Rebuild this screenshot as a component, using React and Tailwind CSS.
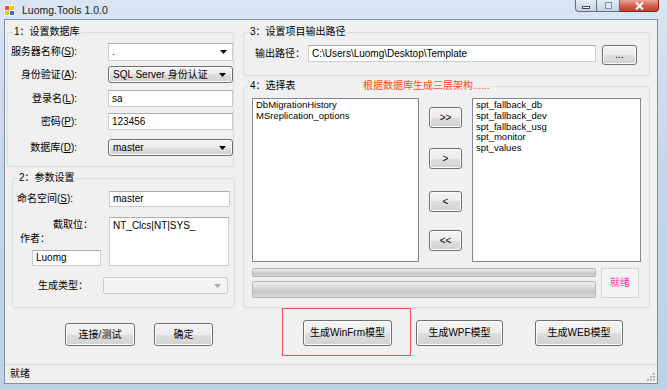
import React from "react";

const font = "font-['Liberation_Sans','Noto_Sans_CJK_SC',sans-serif]";
const btnSkin =
  "rounded-[3px] border border-[#707070] bg-[linear-gradient(#f4f4f4_0%,#ececec_50%,#dedede_50%,#d2d2d2_100%)] shadow-[inset_0_0_0_1px_#fbfbfb] text-[10px] leading-[12px] text-black";
const btn = `flex items-center justify-center ${btnSkin}`;
const textbox =
  "flex items-center bg-white border border-[#c9ccd3] border-t-[#abadb3] px-[3px] text-[10px] leading-[12px] text-black";
const groupBox = "border border-[#d5dfe5] rounded-[3px]";
const legendCls = "ml-[5px] px-[1px] text-[10px] leading-[12px] text-black";

function Arrow({ color = "#000" }) {
  return (
    <svg width="7" height="4" viewBox="0 0 7 4">
      <path d="M0 0h7L3.5 4z" fill={color} />
    </svg>
  );
}

// "(S):" style label with underlined access key
function Label({ text, keyChar, className }) {
  return (
    <div className={className}>
      {text}(<span className="underline">{keyChar}</span>):
    </div>
  );
}

function ComboEdit({ value, className }) {
  return (
    <div className={`${textbox} justify-between pr-[5px] ${className}`}>
      <span>{value}</span>
      <Arrow />
    </div>
  );
}

function ComboList({ value, className }) {
  return (
    <div className={`flex items-center justify-between pl-[4px] pr-[6px] ${btnSkin} ${className}`}>
      <span>{value}</span>
      <Arrow />
    </div>
  );
}

function AppIcon() {
  return (
    <svg width="11" height="11" viewBox="0 0 11 11">
      <rect x="0" y="0" width="11" height="11" fill="#f4f4f4" />
      <rect x="1" y="1" width="4" height="4" fill="#e8502a" />
      <rect x="6" y="1" width="4" height="4" fill="#f3c21c" />
      <rect x="1" y="6" width="4" height="4" fill="#f3c21c" />
      <rect x="6" y="6" width="4" height="4" fill="#2f72c9" />
    </svg>
  );
}

function CaptionButtons() {
  return (
    <div className="ml-auto mr-[8px] flex h-[12px] self-start">
      <div className="flex w-[22px] items-center justify-center rounded-bl-[4px] border border-t-0 border-[#5c6f86] bg-[linear-gradient(#e5edf6,#c3d2e3)]">
        <div className="mt-[3px] h-[3px] w-[8px] border border-[#3c4b5d] bg-white" />
      </div>
      <div className="flex w-[23px] items-center justify-center border border-l-0 border-t-0 border-[#5c6f86] bg-[linear-gradient(#e5edf6,#c3d2e3)]">
        <div className="h-[7px] w-[7px] border border-[#7d8ea3] bg-[#dfe7f0]" />
      </div>
      <div className="flex w-[39px] items-center justify-center rounded-br-[4px] border border-l-0 border-t-0 border-[#7a2a1e] bg-[linear-gradient(#e9a99a,#d45a44_55%,#c2412b)]">
        <svg width="9" height="8" viewBox="0 0 9 8">
          <path d="M1 0.5l7 7M8 0.5l-7 7" stroke="#fff" strokeWidth="2" />
        </svg>
      </div>
    </div>
  );
}

function SizeGrip() {
  const dots = [
    [7, 1],
    [4, 4],
    [7, 4],
    [1, 7],
    [4, 7],
    [7, 7],
  ];
  return (
    <svg width="10" height="10" viewBox="0 0 10 10" className="ml-auto self-end mb-[1px] mr-[1px]">
      {dots.map(([x, y]) => (
        <g key={`${x}-${y}`}>
          <rect x={x + 1} y={y + 1} width="2" height="2" fill="#ffffff" />
          <rect x={x} y={y} width="2" height="2" fill="#b4b4b4" />
        </g>
      ))}
    </svg>
  );
}

function LeftColumn() {
  return (
    <div className="ml-[2px] flex w-[227px] flex-col">
      {/* 1: database */}
      <fieldset className={`${groupBox} mt-[6px] h-[141px]`}>
        <legend className={legendCls}>1：设置数据库</legend>
        <div className="mt-[5px] flex h-[18px] items-center">
          <Label text="服务器名称" keyChar="S" className="w-[69px] text-right text-[10px] leading-[12px]" />
          <ComboEdit value="." className="ml-[31px] h-[18px] w-[125px]" />
        </div>
        <div className="mt-[5px] flex h-[17px] items-center">
          <Label text="身份验证" keyChar="A" className="w-[69px] text-right text-[10px] leading-[12px]" />
          <ComboList value="SQL Server 身份认证" className="ml-[31px] h-[17px] w-[125px]" />
        </div>
        <div className="mt-[7px] flex h-[17px] items-center">
          <Label text="登录名" keyChar="L" className="w-[69px] text-right text-[10px] leading-[12px]" />
          <div className={`${textbox} ml-[31px] h-[17px] w-[125px]`}>sa</div>
        </div>
        <div className="mt-[6px] flex h-[17px] items-center">
          <Label text="密码" keyChar="P" className="w-[69px] text-right text-[10px] leading-[12px]" />
          <div className={`${textbox} ml-[31px] h-[17px] w-[125px]`}>123456</div>
        </div>
        <div className="mt-[9px] flex h-[17px] items-center">
          <Label text="数据库" keyChar="D" className="w-[69px] text-right text-[10px] leading-[12px]" />
          <ComboList value="master" className="ml-[31px] h-[17px] w-[125px]" />
        </div>
      </fieldset>

      {/* 2: parameters */}
      <fieldset className={`${groupBox} ml-[5px] mt-[5px] h-[136px] w-[223px]`}>
        <legend className={legendCls}>2：参数设置</legend>
        <div className="mt-[7px] flex h-[16px] items-center">
          <Label text="命名空间" keyChar="S" className="ml-[4px] w-[62px] text-[10px] leading-[12px]" />
          <div className={`${textbox} ml-[30px] h-[16px] w-[121px]`}>master</div>
        </div>
        <div className="mt-[10px] flex h-[49px]">
          <div className="flex w-[96px] flex-col text-[10px] leading-[12px]">
            <div className="mt-[2px] pr-[16px] text-right">截取位：</div>
            <div className="ml-[7px] mt-[2px]">作者：</div>
            <div className={`${textbox} ml-[19px] mt-[5px] h-[16px] w-[69px]`}>Luomg</div>
          </div>
          <div className="h-[49px] w-[120px] border border-[#c9ccd3] border-t-[#abadb3] bg-white px-[3px] pt-[2px] text-[10px] leading-[12px]">
            NT_Clcs|NT|SYS_
          </div>
        </div>
        <div className="mt-[11px] flex h-[17px] items-center">
          <div className="ml-[25px] w-[50px] text-[10px] leading-[12px]">生成类型：</div>
          <div className="ml-[15px] flex h-[17px] w-[125px] items-center justify-end rounded-[2px] border border-[#c8ccd0] bg-[#f4f4f4] pr-[6px]">
            <Arrow color="#a8a8a8" />
          </div>
        </div>
      </fieldset>

      <div className="mt-[15px] flex">
        <div className={`${btn} ml-[58px] h-[23px] w-[70px]`}>连接/测试</div>
        <div className={`${btn} ml-[19px] h-[23px] w-[59px]`}>确定</div>
      </div>
    </div>
  );
}

const leftTables = ["DbMigrationHistory", "MSreplication_options"];
const rightTables = ["spt_fallback_db", "spt_fallback_dev", "spt_fallback_usg", "spt_monitor", "spt_values"];

function ListBox({ items, className }) {
  return (
    <div className={`border border-[#828790] bg-white px-[3px] pt-[1px] text-[9.5px] leading-[10.75px] text-black ${className}`}>
      {items.map((t) => (
        <div key={t}>{t}</div>
      ))}
    </div>
  );
}

const progress =
  "rounded-[2px] border border-[#b2b2b2] bg-[linear-gradient(#f2f2f2,#dadada_35%,#c6c6c6_65%,#d8d8d8)]";

function RightColumn() {
  return (
    <div className="ml-[9px] flex w-[407px] flex-col">
      {/* 3: output path */}
      <fieldset className={`${groupBox} mt-[6px] h-[50px]`}>
        <legend className={legendCls}>3：设置项目输出路径</legend>
        <div className="mt-[7px] flex h-[20px]">
          <div className="flex h-[17px] w-[64px] items-center pl-[11px] text-[10px] leading-[12px]">输出路径：</div>
          <div className={`${textbox} h-[17px] w-[288px]`}>C:\Users\Luomg\Desktop\Template</div>
          <div className={`${btn} ml-[6px] h-[20px] w-[35px]`}>...</div>
        </div>
      </fieldset>

      {/* 4: tables */}
      <fieldset className={`${groupBox} mt-[4px] h-[228px]`}>
        <legend className={`${legendCls} flex`}>
          <span className="w-[113px]">4：选择表</span>
          <span className="text-[#ff4a12]">根据数据库生成三层架构......</span>
        </legend>
        <div className="mt-[6px] flex h-[164px]">
          <ListBox items={leftTables} className="ml-[8px] h-[164px] w-[167px]" />
          <div className="ml-[10px] flex w-[33px] flex-col text-[10px]">
            <div className={`${btn} mt-[9px] h-[21px]`}>&gt;&gt;</div>
            <div className={`${btn} mt-[20px] h-[21px]`}>&gt;</div>
            <div className={`${btn} mt-[22px] h-[21px]`}>&lt;</div>
            <div className={`${btn} mt-[18px] h-[21px]`}>&lt;&lt;</div>
          </div>
          <ListBox items={rightTables} className="ml-[10px] h-[164px] w-[169px]" />
        </div>
        <div className="mt-[6px] flex">
          <div className="ml-[8px] flex w-[344px] flex-col">
            <div className={`${progress} h-[9px]`} />
            <div className={`${progress} mt-[4px] h-[17px]`} />
          </div>
          <div className="ml-[5px] flex h-[30px] w-[38px] items-center justify-center border border-[#d2d2d2] bg-[#f3f3f3] text-[10px] leading-[12px] text-[#ff33a8]">
            就绪
          </div>
        </div>
      </fieldset>

      <div className="mt-[12px] flex">
        <div className="relative ml-[60px]">
          <div className={`${btn} h-[26px] w-[89px]`}>生成WinFrm模型</div>
          {/* annotation frame drawn over the screenshot */}
          <div className="pointer-events-none absolute -bottom-[10px] -left-[21px] -right-[19px] -top-[12px] border border-[#ec5050]" />
        </div>
        <div className={`${btn} ml-[24px] h-[26px] w-[87px]`}>生成WPF模型</div>
        <div className={`${btn} ml-[32px] h-[26px] w-[88px]`}>生成WEB模型</div>
      </div>
    </div>
  );
}

export default function App() {
  return (
    <div
      className={`${font} flex h-[389px] w-[667px] flex-col overflow-hidden bg-[linear-gradient(#d9e5f2,#c6d7ea_40%,#bcd0e7)] text-black`}
    >
      {/* title bar */}
      <div className="flex h-[19px] items-center">
        <div className="ml-[4px] mt-[1px]">
          <AppIcon />
        </div>
        <div className="ml-[7px] text-[10.5px] leading-[12px] text-[#1b1b1b]">Luomg.Tools 1.0.0</div>
        <CaptionButtons />
      </div>

      {/* client area */}
      <div className="ml-[4px] flex h-[365px] w-[654px] flex-col border border-[#7f8ea2] bg-[#f0f0f0]">
        <div className="flex h-[344px]">
          <LeftColumn />
          <RightColumn />
        </div>
        <div className="flex h-[19px] items-center border-t border-[#d4d4d4] bg-[#f0efee] pl-[5px] text-[10px] leading-[12px]">
          <span>就绪</span>
          <SizeGrip />
        </div>
      </div>
    </div>
  );
}
